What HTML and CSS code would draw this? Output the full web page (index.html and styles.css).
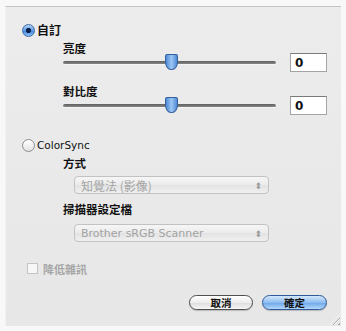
FILE: index.html
```html
<!DOCTYPE html>
<html lang="zh-Hant">
<head>
  <meta charset="UTF-8" />
  <title>ColorSync</title>
  <link rel="stylesheet" href="styles.css">
</head>
<body>
  <div class="dialog">
    <div class="option">
      <span class="radio on"></span>
      <span class="opt-text">自訂</span>
    </div>

    <div class="field-label first">亮度</div>
    <div class="slider-row">
      <div class="track"><span class="thumb" style="left: 50.7%"></span></div>
      <input class="num" type="text" value="0" />
    </div>

    <div class="field-label second">對比度</div>
    <div class="slider-row">
      <div class="track"><span class="thumb" style="left: 50.7%"></span></div>
      <input class="num" type="text" value="0" />
    </div>

    <div class="option colorsync">
      <span class="radio"></span>
      <span class="opt-text latin">ColorSync</span>
    </div>

    <div class="field-label third">方式</div>
    <div class="select">
      <span class="select-text">知覺法 (影像)</span>
      <span class="arrows">⬍</span>
    </div>

    <div class="field-label fourth">掃描器設定檔</div>
    <div class="select">
      <span class="select-text latin">Brother sRGB Scanner</span>
      <span class="arrows">⬍</span>
    </div>

    <div class="check-row">
      <span class="checkbox"></span>
      <span class="check-text">降低雜訊</span>
    </div>

    <div class="buttons">
      <button class="btn">取消</button>
      <button class="btn default">確定</button>
    </div>

    <span class="grip"></span>
  </div>
</body>
</html>
```

FILE: styles.css
```css
body {
  margin: 0;
  background-color: #f8f8f8;
  font-family: "Noto Sans CJK TC", "DejaVu Sans", sans-serif;
  color: #111;
}

.dialog {
  position: relative;
  margin: 6px 5px 0 5px;
  height: 320px;
  box-sizing: border-box;
  padding: 16px 14px 0 16px;
  background: linear-gradient(#ececec, #e7e7e7);
  border-top: 1px solid #c4c4c4;
  border-left: 1px solid #f2f2f2;
}

.option {
  display: flex;
  align-items: center;
  height: 14px;
}

.option.colorsync {
  margin-top: 23px;
}

.radio {
  width: 11px;
  height: 11px;
  border-radius: 50%;
  border: 1px solid #8c8c8c;
  background: linear-gradient(#ffffff, #e4e4e4);
}

.radio.on {
  border-color: #3f6aa6;
  background: radial-gradient(circle, #0b2046 0 2.2px, transparent 3px),
              linear-gradient(#b6d6f8, #4a8fe0 60%, #8cc0f5);
}

.opt-text {
  margin-left: 2px;
  font-size: 12px;
  font-weight: bold;
  line-height: 14px;
}

.latin {
  font-family: "DejaVu Sans", sans-serif;
  font-weight: normal;
  font-size: 10.5px;
}

.field-label {
  margin-left: 41px;
  height: 10px;
  line-height: 10px;
  font-size: 11.5px;
  font-weight: bold;
}

.field-label.first { margin-top: 6px; }
.field-label.second { margin-top: 14px; }
.field-label.third { margin-top: 6px; }
.field-label.fourth { margin-top: 10px; margin-bottom: 10px; }

.slider-row {
  display: flex;
  align-items: center;
  height: 19px;
}

.track {
  position: relative;
  margin-left: 41px;
  width: 214px;
  height: 3px;
  border-radius: 2px;
  background: linear-gradient(#5f5f5f, #858585);
  border-bottom: 1px solid #f4f4f4;
}

.thumb {
  position: absolute;
  top: -7px;
  width: 13px;
  height: 16px;
  margin-left: -6px;
  border: 1px solid #35609e;
  box-sizing: border-box;
  border-radius: 2px 2px 6px 6px / 2px 2px 8px 8px;
  background: linear-gradient(90deg, #4f89d6, #9cc6f4 50%, #4f89d6);
}

.num {
  margin-left: 14px;
  width: 37px;
  height: 19px;
  box-sizing: border-box;
  padding: 0 4px;
  border: 1px solid #a4a4a4;
  border-top-color: #7a7a7a;
  background: #fff;
  font-family: "DejaVu Sans", sans-serif;
  font-size: 12px;
  font-weight: bold;
  color: #111;
}

.select {
  display: flex;
  align-items: center;
  justify-content: space-between;
  margin-top: 8px;
  margin-left: 52px;
  width: 195px;
  height: 18px;
  box-sizing: border-box;
  padding: 0 6px 0 6px;
  border: 1px solid #c2c2c2;
  border-radius: 4px;
  background: linear-gradient(#f6f6f6, #ebebeb 50%, #e3e3e3 51%, #efefef);
}

.select-text {
  font-size: 12px;
  color: #a3a3a3;
  white-space: nowrap;
}

.select-text.latin {
  font-size: 11px;
}

.arrows {
  font-size: 9px;
  color: #9c9c9c;
}

.check-row {
  display: flex;
  align-items: center;
  margin-top: 20px;
  margin-left: 5px;
  height: 13px;
}

.checkbox {
  width: 9px;
  height: 9px;
  border: 1px solid #c4c4c4;
  background: #f7f7f7;
}

.check-text {
  margin-left: 5px;
  font-size: 11px;
  font-weight: bold;
  color: #a6a6a6;
}

.buttons {
  display: flex;
  justify-content: flex-end;
  gap: 9px;
  margin-top: 20px;
}

.btn {
  width: 64px;
  height: 15px;
  padding: 0;
  border: 1px solid #4f4f4f;
  border-radius: 8px;
  background: linear-gradient(#ffffff, #ededed 50%, #dcdcdc 51%, #f6f6f6);
  box-shadow: 0 1px 1px rgba(0, 0, 0, 0.2);
  font-family: "Noto Sans CJK TC", sans-serif;
  font-size: 10.5px;
  font-weight: bold;
  line-height: 13px;
  color: #111;
}

.btn.default {
  width: 65px;
  border-color: #2f5a98;
  background: linear-gradient(#d4e8fc, #8ebcf0 50%, #6aa5ea 51%, #b3d8fb);
}

.grip {
  position: absolute;
  right: 1px;
  bottom: 1px;
  width: 11px;
  height: 11px;
  background: repeating-linear-gradient(135deg, transparent 0 2px, #a9a9a9 2px 3px, #f8f8f8 3px 4px);
  clip-path: polygon(100% 0, 100% 100%, 0 100%);
}
```
